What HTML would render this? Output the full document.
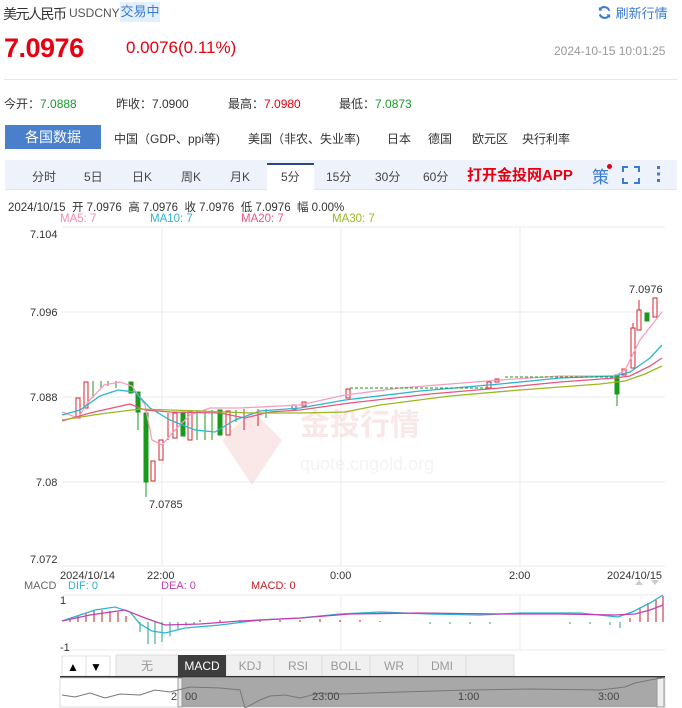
<!DOCTYPE html>
<html><head><meta charset="utf-8"><style>
*{margin:0;padding:0;box-sizing:border-box}
body{width:682px;height:708px;background:#fff;font-family:"Liberation Sans","Noto Sans CJK SC",sans-serif;position:relative;overflow:hidden;color:#333}
.a{position:absolute;white-space:nowrap}
</style></head><body>
<div class="a" style="left:3px;top:4px;font-size:14px;color:#333;letter-spacing:-1.5px">美元人民币</div>
<div class="a" style="left:69px;top:6px;font-size:12px;color:#555">USDCNY</div>
<div class="a" style="left:120px;top:2px;width:40px;height:20px;background:#e3effb;color:#3a7bd5;font-size:13px;line-height:20px;text-align:center">交易中</div>
<div class="a" style="left:597px;top:3px;font-size:13px;color:#3a7bd5"><svg width="15" height="15" viewBox="0 0 16 16" style="vertical-align:-2px"><path d="M13 6A5.5 5.5 0 0 0 3 5M3 10a5.5 5.5 0 0 0 10 1" fill="none" stroke="#3a7bd5" stroke-width="2.2"/><path d="M2 2v4h4zM14 14v-4h-4z" fill="#3a7bd5"/></svg> 刷新行情</div>
<div class="a" style="left:4px;top:33px;font-size:27px;font-weight:bold;color:#e60012;letter-spacing:-0.5px">7.0976</div>
<div class="a" style="left:126px;top:38px;font-size:17px;color:#e60012">0.0076(0.11%)</div>
<div class="a" style="left:554px;top:44px;font-size:12px;color:#999">2024-10-15 10:01:25</div>
<div class="a" style="left:4px;top:79px;width:674px;height:1px;background:#e8e8e8"></div>
<div class="a" style="left:4px;top:95px;font-size:12px">今开：<span style="color:#1a9a2a">7.0888</span></div>
<div class="a" style="left:116px;top:95px;font-size:12px">昨收：7.0900</div>
<div class="a" style="left:228px;top:95px;font-size:12px">最高：<span style="color:#e60012">7.0980</span></div>
<div class="a" style="left:339px;top:95px;font-size:12px">最低：<span style="color:#1a9a2a">7.0873</span></div>
<div class="a" style="left:5px;top:125px;width:96px;height:24px;background:#4a7fcb;color:#fff;font-size:14px;line-height:24px;text-align:center">各国数据</div>
<div class="a" style="left:114px;top:130px;font-size:12px">中国（GDP、ppi等)</div>
<div class="a" style="left:248px;top:130px;font-size:12px">美国（非农、失业率)</div>
<div class="a" style="left:387px;top:130px;font-size:12px">日本</div>
<div class="a" style="left:428px;top:130px;font-size:12px">德国</div>
<div class="a" style="left:472px;top:130px;font-size:12px">欧元区</div>
<div class="a" style="left:522px;top:130px;font-size:12px">央行利率</div>
<div class="a" style="left:5px;top:160px;width:672px;height:30px;background:#eef3fb;border-bottom:1px solid #dde6f2"></div>
<div class="a" style="left:267px;top:163px;width:47px;height:28px;background:#fff;border-top:2px solid #2a4a7c"></div>
<div class="a" style="top:168px;left:0;font-size:12px;color:#444">
<span class="a" style="left:32px">分时</span><span class="a" style="left:84px">5日</span><span class="a" style="left:132px">日K</span><span class="a" style="left:181px">周K</span><span class="a" style="left:230px">月K</span><span class="a" style="left:281px">5分</span><span class="a" style="left:326px">15分</span><span class="a" style="left:375px">30分</span><span class="a" style="left:423px">60分</span></div>
<div class="a" style="left:467px;top:164px;font-size:15px;font-weight:bold;color:#e60012">打开金投网APP</div>
<div class="a" style="left:592px;top:163px;font-size:17px;color:#3a7bd5">策</div>
<div class="a" style="left:607px;top:164px;width:5px;height:5px;border-radius:50%;background:#e60012"></div>
<svg class="a" style="left:622px;top:166px" width="18" height="18"><path d="M1 6V1h5M12 1h5v5M17 12v5h-5M6 17H1v-5" fill="none" stroke="#3a7bd5" stroke-width="2"/></svg>
<div class="a" style="left:657px;top:166px;width:3px;height:16px;background:repeating-linear-gradient(#3a7bd5 0 3px,transparent 3px 6.5px)"></div>
<div class="a" style="left:8px;top:199px;font-size:11.5px;color:#333">2024/10/15 &nbsp;开 7.0976 &nbsp;高 7.0976 &nbsp;收 7.0976 &nbsp;低 7.0976 &nbsp;幅 0.00%</div>
<div class="a" style="left:60px;top:213px;font-size:11.5px;color:#f08cb0">MA5: 7</div>
<div class="a" style="left:150px;top:213px;font-size:11.5px;color:#2bb5d1">MA10: 7</div>
<div class="a" style="left:241px;top:213px;font-size:11.5px;color:#e8577f">MA20: 7</div>
<div class="a" style="left:332px;top:213px;font-size:11.5px;color:#9ab820">MA30: 7</div>
<svg class="a" style="left:0;top:0" width="682" height="708" font-family="Liberation Sans,sans-serif">
<g stroke="#ebebeb" stroke-width="1">
<line x1="62" y1="227" x2="665" y2="227"/><line x1="62" y1="312" x2="665" y2="312"/><line x1="62" y1="397" x2="665" y2="397"/><line x1="62" y1="482" x2="665" y2="482"/><line x1="62" y1="566" x2="665" y2="566"/>
<line x1="162" y1="227" x2="162" y2="566"/><line x1="341" y1="227" x2="341" y2="566"/><line x1="520" y1="227" x2="520" y2="566"/>
<line x1="62" y1="595" x2="665" y2="595"/><line x1="62" y1="650" x2="665" y2="650"/>
<line x1="162" y1="595" x2="162" y2="650"/><line x1="341" y1="595" x2="341" y2="650"/><line x1="520" y1="595" x2="520" y2="650"/>
</g>
<g font-size="11" fill="#333">
<text x="30" y="238">7.104</text><text x="30" y="316">7.096</text><text x="30" y="401">7.088</text><text x="36" y="486">7.08</text><text x="30" y="563">7.072</text>
<text x="60" y="579">2024/10/14</text><text x="147" y="579">22:00</text><text x="330" y="579">0:00</text><text x="509" y="579">2:00</text><text x="607" y="579">2024/10/15</text>
<text x="149" y="508">7.0785</text><text x="629" y="293">7.0976</text>
</g>
<g opacity="0.09"><path d="M222 440l30-30 30 30-30 45z" fill="#c00"/><text x="300" y="435" font-size="30" fill="#c00" font-weight="bold" font-family="Noto Sans CJK SC">金投行情</text><text x="300" y="470" font-size="18" fill="#888">quote.cngold.org</text></g>
<g stroke="#d9232e" fill="#fff" stroke-width="1">
<rect x="76" y="398" width="4" height="20"/><rect x="84" y="382" width="4" height="26"/>
<rect x="151" y="461" width="4" height="20"/><rect x="159" y="440" width="4" height="20"/><rect x="173" y="413" width="4" height="25"/><rect x="188" y="412" width="4" height="28"/>
<rect x="226" y="411" width="4" height="24"/><rect x="292" y="405" width="4" height="4"/><rect x="302" y="402" width="4" height="4"/>
<rect x="346" y="389" width="4" height="9"/><rect x="487" y="382" width="4" height="6"/><rect x="495" y="379" width="4" height="3"/>
<rect x="622" y="369" width="4" height="6"/><rect x="631" y="328" width="4" height="40"/><rect x="637" y="310" width="4" height="20"/><rect x="653" y="298" width="4" height="19"/>
<line x1="168" y1="413" x2="168" y2="440"/><line x1="633" y1="323" x2="633" y2="328"/><line x1="639" y1="300" x2="639" y2="310"/><line x1="244" y1="409" x2="244" y2="430"/><line x1="258" y1="409" x2="258" y2="426"/>
</g>
<g fill="#1a9a1a" stroke="#1a9a1a">
<rect x="129" y="382" width="4" height="11"/><rect x="136" y="392" width="4" height="20"/><line x1="138" y1="412" x2="138" y2="430"/>
<rect x="144" y="413" width="4" height="69"/><line x1="146" y1="482" x2="146" y2="497"/>
<rect x="181" y="412" width="4" height="24"/><rect x="218" y="410" width="4" height="25"/><rect x="615" y="375" width="4" height="19"/><line x1="617" y1="394" x2="617" y2="406"/><rect x="645" y="313" width="4" height="8"/>
<line x1="93" y1="381" x2="93" y2="398"/><line x1="101" y1="381" x2="101" y2="388"/><line x1="108" y1="381" x2="108" y2="386"/><line x1="116" y1="381" x2="116" y2="388"/>
<line x1="197" y1="410" x2="197" y2="440"/><line x1="205" y1="410" x2="205" y2="440"/><line x1="212" y1="410" x2="212" y2="440"/><line x1="236" y1="410" x2="236" y2="422"/><line x1="266" y1="409" x2="266" y2="418"/>
</g>
<g fill="none" stroke-width="1.3">
<path d="M62 412 78 418 88 402 104 385 120 382 132 386 145 405 152 440 162 445 175 430 190 415 210 408 240 408 300 405 345 395 400 388 500 380 560 376 615 376 625 370 640 340 662 312" stroke="#f3a0c0"/>
<path d="M62 415 80 410 100 396 118 390 135 392 150 408 170 420 195 430 215 432 235 420 260 411 300 408 345 400 420 391 500 384 560 378 615 376 630 372 650 358 662 345" stroke="#2bb5d1"/>
<path d="M62 421 90 413 130 404 145 410 170 412 220 413 245 418 270 412 300 410 350 403 430 394 500 388 560 382 615 378 630 376 650 366 662 358" stroke="#e8577f"/>
<path d="M62 420 100 414 140 409 200 411 250 413 300 413 345 412 380 405 450 396 520 390 600 384 625 381 645 374 662 366" stroke="#9ab820"/>
</g>
<path d="M350 388H490M505 377H617" stroke="#1a9a1a" stroke-dasharray="3 2"/>
<g font-size="11"><text x="24" y="589" fill="#666">MACD</text><text x="68" y="589" fill="#2bb5d1">DIF: 0</text><text x="161" y="589" fill="#c040b0">DEA: 0</text><text x="251" y="589" fill="#c0202a">MACD: 0</text>
<text x="60" y="604" fill="#333">1</text><text x="60" y="651" fill="#333">-1</text></g>
<path d="M635 585l4-5 4 5zM651 580l4 5 4-5z" fill="#ccc"/>
<g stroke="#c0202a"><path d="M70 622v-2M78 622v-6M86 622v-9M94 622v-11M102 622v-12M110 622v-11M118 622v-10M126 622v-6M200 622v-2M220 622v-2M240 622v-2M260 622v-2M280 622v-2M300 622v-2M320 622v-3M340 622v-2M360 622v-2M380 622v-1M630 622v-4M640 622v-14M648 622v-19M656 622v-22M663 622v-26"/></g>
<g stroke="#20a080"><path d="M140 622v10M148 622v22M155 622v22M162 622v20M170 622v14M178 622v8M186 622v4M194 622v2M430 622v2M450 622v2M470 622v2M490 622v2M570 622v2M590 622v2M610 622v3M620 622v6"/></g>
<path d="M62 621 80 615 95 610 115 607 130 612 140 624 152 631 165 633 185 628 220 625 260 620 300 618 340 614 380 612 430 614 480 615 520 613 580 613 618 617 632 612 650 603 663 595" fill="none" stroke="#2bb5d1" stroke-width="1.3"/>
<path d="M62 621 90 615 125 610 145 618 165 625 200 624 240 621 300 618 350 614 420 613 500 614 560 614 615 615 635 614 650 610 663 605" fill="none" stroke="#c040b0" stroke-width="1.3"/>
<rect x="62" y="656" width="24" height="20" fill="#fff" stroke="#e0e0e0"/><rect x="86" y="656" width="24" height="20" fill="#fff" stroke="#e0e0e0"/>
<text x="67" y="671" font-size="12" fill="#000">▲</text><text x="90" y="671" font-size="12" fill="#000">▼</text>
<g fill="#f0f0f0" stroke="#ddd"><rect x="116" y="655" width="62" height="21"/><rect x="226" y="655" width="48" height="21"/><rect x="274" y="655" width="48" height="21"/><rect x="322" y="655" width="48" height="21"/><rect x="370" y="655" width="48" height="21"/><rect x="418" y="655" width="48" height="21"/><rect x="466" y="655" width="48" height="21"/></g>
<rect x="178" y="655" width="48" height="21" fill="#3d3d3d"/>
<g font-size="12" fill="#999" text-anchor="middle"><text x="147" y="670">无</text><text x="202" y="670" fill="#fff">MACD</text><text x="250" y="670">KDJ</text><text x="298" y="670">RSI</text><text x="346" y="670">BOLL</text><text x="394" y="670">WR</text><text x="442" y="670">DMI</text></g>
<rect x="60" y="676" width="605" height="2" fill="#333"/>
<rect x="60" y="678" width="605" height="29" fill="#fff" stroke="#ddd"/>
<rect x="180" y="678" width="477" height="29" fill="#a8a8a8"/>
<rect x="657" y="678" width="7" height="29" fill="#eee" stroke="#999"/><rect x="178" y="678" width="4" height="29" fill="#eee" stroke="#999"/>
<path d="M62 695 75 697 90 693 105 698 120 694 140 695 155 690 170 692 190 687 220 688 240 690 245 708 260 700 270 696 285 695 300 698 320 693 340 694 400 692 470 690 530 689 600 690 625 687 635 683 650 680 662 678" fill="none" stroke="#777" stroke-width="1"/>
<g font-size="11" fill="#444"><text x="171" y="700">2</text><text x="185" y="700">00</text><text x="312" y="700">23:00</text><text x="458" y="700">1:00</text><text x="598" y="700">3:00</text></g>
</svg>
</body></html>
